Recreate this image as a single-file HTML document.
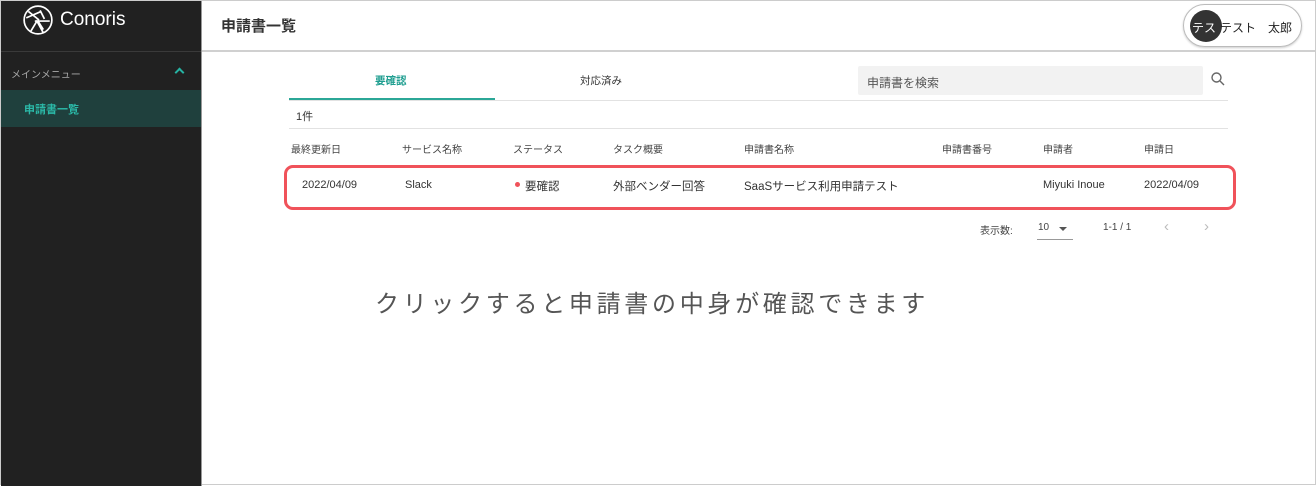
<!DOCTYPE html>
<html><head><meta charset="utf-8"><style>
*{margin:0;padding:0;box-sizing:border-box}
body{width:1316px;height:485px;overflow:hidden;background:#fff;font-family:"Liberation Sans","Noto Sans CJK JP",sans-serif;position:relative;border:1px solid #ccc}
.side{position:absolute;left:0;top:0;width:201px;height:485px;background:#212121;border-right:1px solid #999}
.logo{position:absolute;left:21px;top:3px;display:flex;align-items:center;color:#fff;font-size:19px}
.logo span{margin-left:6px}
.sep{position:absolute;left:0;top:50px;width:200px;height:1px;background:#3a3a3a}
.mm{position:absolute;left:10px;top:65px;font-size:10px;color:#aaa}
.chev{position:absolute;left:175px;top:68px;width:7px;height:7px;border-left:2px solid #26b3a3;border-top:2px solid #26b3a3;transform:rotate(45deg)}
.act{position:absolute;left:0;top:89px;width:200px;height:37px;background:#1f403d;color:#2bb9a8;font-size:11px;font-weight:bold;padding:11px 0 0 23px}
.hdr{position:absolute;left:201px;top:0;right:0;height:51px;border-bottom:2px solid #d0d0d0}
.ttl{position:absolute;left:19px;top:14px;font-size:15px;color:#333;font-weight:bold}
.user{position:absolute;right:13px;top:3px;width:119px;height:43px;border:1px solid #bbb;border-radius:22px;box-shadow:0 1px 2px #ccc}
.av{position:absolute;left:6px;top:5px;width:32px;height:32px;border-radius:50%;background:#333}
.avt{position:absolute;left:8px;top:14px;font-size:12px;color:#fff;white-space:nowrap}
.un{position:absolute;left:36px;top:14px;font-size:12px;color:#222;white-space:nowrap}
.t{position:absolute;font-size:11px;color:#333;white-space:nowrap}
.h{font-size:10px;color:#444}
</style></head><body>
<div class="side">
 <div class="logo"><svg width="32" height="32" viewBox="0 0 30 30" fill="none" stroke="#fff" stroke-width="1.6"><circle cx="15" cy="15" r="13"/><path d="M6 7l10 8M4 13l14-6M8 26l6-10 6 11M12 16h14M17 6l4 8M20 24l-5-8"/></svg><span>Conoris</span></div>
 <div class="sep"></div>
 <div class="mm">メインメニュー</div><div class="chev"></div>
 <div class="act">申請書一覧</div>
</div>
<div class="hdr"><div class="ttl">申請書一覧</div>
 <div class="user"><div class="av"></div><div class="avt">テス</div><div class="un">テスト　太郎</div></div>
</div>
<div class="t" style="left:374px;top:72px;color:#1f9e90;font-weight:bold;font-size:10.5px">要確認</div>
<div style="position:absolute;left:288px;top:97px;width:206px;height:2px;background:#2ba797"></div>
<div class="t" style="left:579px;top:72px;font-size:10.5px">対応済み</div>
<div style="position:absolute;left:857px;top:65px;width:345px;height:29px;background:#f2f2f2;border-radius:2px"></div>
<div class="t" style="left:866px;top:73px;font-size:12px;color:#555">申請書を検索</div>
<svg style="position:absolute;left:1210px;top:71px" width="14" height="14" viewBox="0 0 14 14" fill="none" stroke="#666" stroke-width="1.4"><circle cx="5.5" cy="5.5" r="4.5"/><path d="M9 9l4 4"/></svg>
<div style="position:absolute;left:288px;top:99px;width:939px;height:1px;background:#e2e2e2"></div>
<div class="t" style="left:295px;top:107px">1件</div>
<div style="position:absolute;left:288px;top:127px;width:939px;height:1px;background:#e2e2e2"></div>
<div class="t h" style="left:290px;top:140px">最終更新日</div>
<div class="t h" style="left:401px;top:140px">サービス名称</div>
<div class="t h" style="left:512px;top:140px">ステータス</div>
<div class="t h" style="left:612px;top:140px">タスク概要</div>
<div class="t h" style="left:743px;top:140px">申請書名称</div>
<div class="t h" style="left:941px;top:140px">申請書番号</div>
<div class="t h" style="left:1042px;top:140px">申請者</div>
<div class="t h" style="left:1143px;top:140px">申請日</div>
<div style="position:absolute;left:283px;top:164px;width:952px;height:45px;border:3px solid #f0525a;border-radius:9px"></div>
<div class="t" style="left:301px;top:178px">2022/04/09</div>
<div class="t" style="left:404px;top:178px">Slack</div>
<div style="position:absolute;left:514px;top:181px;width:5px;height:5px;border-radius:50%;background:#f0525a"></div>
<div class="t" style="left:524px;top:177px;font-size:11.5px">要確認</div>
<div class="t" style="left:612px;top:177px;font-size:11.5px">外部ベンダー回答</div>
<div class="t" style="left:743px;top:177px;font-size:11.5px">SaaSサービス利用申請テスト</div>
<div class="t" style="left:1042px;top:178px">Miyuki Inoue</div>
<div class="t" style="left:1143px;top:178px">2022/04/09</div>
<div class="t h" style="left:979px;top:221px">表示数:</div>
<div class="t h" style="left:1037px;top:221px">10</div>
<div style="position:absolute;left:1058px;top:226px;border-left:4px solid transparent;border-right:4px solid transparent;border-top:4px solid #555"></div>
<div style="position:absolute;left:1036px;top:238px;width:36px;height:1px;background:#999"></div>
<div class="t h" style="left:1102px;top:221px">1-1 / 1</div>
<div class="t" style="left:1163px;top:217px;color:#bbb;font-size:15px">‹</div>
<div class="t" style="left:1203px;top:217px;color:#bbb;font-size:15px">›</div>
<div class="t" style="left:374px;top:283px;font-size:24px;letter-spacing:3.7px;color:#555">クリックすると申請書の中身が確認できます</div>
</body></html>
